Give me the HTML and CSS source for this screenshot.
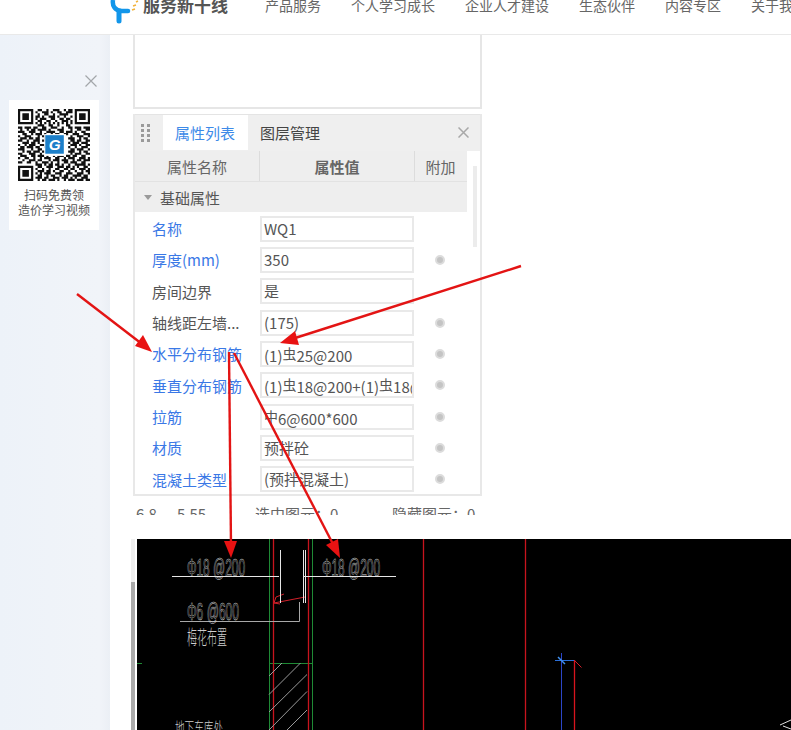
FILE: index.html
```html
<!DOCTYPE html>
<html lang="zh">
<head>
<meta charset="utf-8">
<title>服务新干线</title>
<link rel="stylesheet" href="styles.css">
</head>
<body>
<div class="app">
  <header class="topbar">
    <div class="logo">
      <svg class="logo-mark" width="29" height="24" viewBox="0 0 29 24">
        <path d="M3 0C2 6 5 10 11 11" fill="none" stroke="#1296ea" stroke-width="4.5"/>
        <path d="M9 11H18" fill="none" stroke="#1296ea" stroke-width="4.5" stroke-linecap="round"/>
        <path d="M9 12V21" fill="none" stroke="#1296ea" stroke-width="5" stroke-linecap="round"/>
        <path d="M22 10l3-1M23 6l3-1M26 2l2-1" fill="none" stroke="#f2b23a" stroke-width="1.6"/>
      </svg>
      <span class="logo-text">服务新干线</span>
    </div>
    <nav class="nav">
      <a>产品服务</a><a>个人学习成长</a><a>企业人才建设</a><a>生态伙伴</a><a>内容专区</a><a>关于我们</a>
    </nav>
  </header>
  <div class="content">
    <aside class="side">
      <svg class="side-close" width="12" height="12" viewBox="0 0 12 12"><path d="M.5.5l11 11M11.5.5l-11 11" stroke="#a3a6aa" stroke-width="1.2" fill="none"/></svg>
      <div class="qr-card">
        <svg class="qr" width="72" height="72" viewBox="0 0 33 33">
          <path fill="none" stroke="#111" stroke-width="1" d="M.5.5h6v6h-6zM26.5.5h6v6h-6zM.5 26.5h6v6h-6z"/>
          <path fill="#111" d="M2 2h3v3H2zM28 2h3v3h-3zM2 28h3v3H2z"/>
          <path fill="none" stroke="#111" stroke-width="1" d="M9 .5h2M13 .5h1M16 .5h3M21 .5h1M23 .5h2M8 1.5h1M11 1.5h3M15 1.5h1M18 1.5h2M22 1.5h3M9 2.5h1M12 2.5h2M16 2.5h1M19 2.5h4M8 3.5h2M11 3.5h1M14 3.5h3M18 3.5h1M21 3.5h1M24 3.5h1M8 4.5h1M10 4.5h3M15 4.5h2M19 4.5h2M22 4.5h2M9 5.5h2M13 5.5h2M17 5.5h1M20 5.5h3M24 5.5h1M8 6.5h1M10 6.5h1M12 6.5h1M14 6.5h1M16 6.5h1M18 6.5h1M20 6.5h1M22 6.5h1M24 6.5h1M9 7.5h3M14 7.5h2M18 7.5h1M22 7.5h2M0 8.5h2M3 8.5h3M7 8.5h2M11 8.5h2M15 8.5h3M20 8.5h1M23 8.5h2M26 8.5h3M30 8.5h3M1 9.5h1M4 9.5h1M6 9.5h2M9 9.5h4M14 9.5h1M18 9.5h3M24 9.5h1M27 9.5h2M31 9.5h2M0 10.5h3M5 10.5h3M10 10.5h1M13 10.5h4M19 10.5h2M22 10.5h3M26 10.5h1M29 10.5h2M2 11.5h2M6 11.5h1M8 11.5h3M12 11.5h1M15 11.5h1M17 11.5h2M21 11.5h2M25 11.5h3M30 11.5h3M0 12.5h1M3 12.5h3M9 12.5h1M11 12.5h2M14 12.5h2M24 12.5h1M27 12.5h3M32 12.5h1M1 13.5h3M5 13.5h2M8 13.5h2M12 13.5h1M23 13.5h3M28 13.5h1M30 13.5h2M0 14.5h2M4 14.5h1M7 14.5h3M11 14.5h2M24 14.5h2M27 14.5h2M31 14.5h2M2 15.5h3M6 15.5h2M9 15.5h1M13 15.5h1M23 15.5h1M25 15.5h3M29 15.5h3M0 16.5h1M3 16.5h1M5 16.5h3M10 16.5h3M24 16.5h3M28 16.5h1M31 16.5h2M1 17.5h2M4 17.5h3M8 17.5h2M12 17.5h1M23 17.5h1M26 17.5h1M29 17.5h3M0 18.5h3M6 18.5h1M9 18.5h2M13 18.5h1M24 18.5h2M27 18.5h3M32 18.5h1M2 19.5h1M4 19.5h2M7 19.5h3M11 19.5h2M23 19.5h3M28 19.5h1M30 19.5h2M0 20.5h2M5 20.5h3M10 20.5h1M14 20.5h3M19 20.5h2M24 20.5h1M26 20.5h3M31 20.5h2M1 21.5h3M6 21.5h2M9 21.5h3M13 21.5h1M16 21.5h1M18 21.5h3M22 21.5h2M25 21.5h2M29 21.5h2M0 22.5h1M3 22.5h2M7 22.5h1M10 22.5h1M12 22.5h3M17 22.5h2M21 22.5h1M23 22.5h3M28 22.5h3M32 22.5h1M2 23.5h1M5 23.5h3M9 23.5h2M14 23.5h1M16 23.5h3M20 23.5h3M25 23.5h1M27 23.5h2M30 23.5h3M0 24.5h2M4 24.5h2M8 24.5h1M11 24.5h3M15 24.5h1M18 24.5h1M21 24.5h2M24 24.5h3M29 24.5h2M8 25.5h3M12 25.5h1M14 25.5h2M17 25.5h2M20 25.5h1M23 25.5h1M26 25.5h5M32 25.5h1M9 26.5h2M13 26.5h3M18 26.5h3M22 26.5h2M25 26.5h1M27 26.5h1M30 26.5h2M8 27.5h1M11 27.5h1M14 27.5h1M17 27.5h2M21 27.5h2M24 27.5h2M28 27.5h3M32 27.5h1M9 28.5h3M13 28.5h2M16 28.5h1M19 28.5h2M23 28.5h1M26 28.5h1M29 28.5h1M31 28.5h2M8 29.5h1M10 29.5h1M12 29.5h3M17 29.5h3M22 29.5h3M27 29.5h3M32 29.5h1M9 30.5h2M13 30.5h1M15 30.5h2M19 30.5h1M21 30.5h2M25 30.5h4M30 30.5h2M8 31.5h3M12 31.5h2M16 31.5h3M20 31.5h3M24 31.5h1M26 31.5h1M29 31.5h3M9 32.5h1M11 32.5h2M14 32.5h3M18 32.5h1M21 32.5h1M23 32.5h3M27 32.5h3M31 32.5h2"/>
          <rect x="12" y="11.5" width="10" height="10" fill="#fff"/>
          <rect x="12.500" y="12" width="8.500" height="8.500" fill="#1c7fc9"/>
          <text x="16.800" y="19" class="qr-g" text-anchor="middle">G</text>
        </svg>
        <p class="qr-text">扫码免费领<br>造价学习视频</p>
      </div>
    </aside>
    <main class="main">
      <div class="blank-box"></div>
      <section class="panel">
        <div class="panel-bar">
          <svg class="drag" width="9" height="18" viewBox="0 0 9 18"><path fill="#9a9a9a" d="M0 0h3v3H0zM6 0h3v3H6zM0 5h3v3H0zM6 5h3v3H6zM0 10h3v3H0zM6 10h3v3H6zM0 15h3v3H0zM6 15h3v3H6z"/></svg>
          <span class="tab tab-on">属性列表</span>
          <span class="tab">图层管理</span>
          <svg class="panel-close" width="11" height="11" viewBox="0 0 11 11"><path d="M.5.5l10 10M10.5.5l-10 10" stroke="#a8a8a8" stroke-width="1.5" fill="none"/></svg>
        </div>
        <div class="panel-body">
          <div class="prop-wrap">
            <div class="thead">
              <span class="th">属性名称</span>
              <span class="th th-val">属性值</span>
              <span class="th th-add">附加</span>
            </div>
            <div class="group"><i class="caret"></i>基础属性</div>
            <div class="rows">
              <div class="row"><span class="key link">名称</span><span class="val">WQ1</span></div>
              <div class="row"><span class="key link">厚度(mm)</span><span class="val">350</span><i class="dot"></i></div>
              <div class="row"><span class="key">房间边界</span><span class="val">是</span></div>
              <div class="row"><span class="key">轴线距左墙...</span><span class="val">(175)</span><i class="dot"></i></div>
              <div class="row"><span class="key link">水平分布钢筋</span><span class="val">(1)<b class="bar">虫</b>25@200</span><i class="dot"></i></div>
              <div class="row"><span class="key link">垂直分布钢筋</span><span class="val">(1)<b class="bar">虫</b>18@200+(1)<b class="bar">虫</b>18@200</span><i class="dot"></i></div>
              <div class="row"><span class="key link">拉筋</span><span class="val"><b class="bar">中</b>6@600*600</span><i class="dot"></i></div>
              <div class="row"><span class="key link">材质</span><span class="val">预拌砼</span><i class="dot"></i></div>
              <div class="row"><span class="key link">混凝土类型</span><span class="val">(预拌混凝土)</span><i class="dot"></i></div>
            </div>
          </div>
          <div class="vscroll"></div>
        </div>
      </section>
      <div class="status"><span class="st-a">6.8，-5.55</span><span class="st-b">选中图元：0</span><span>隐藏图元：0</span></div>
      <div class="cad-row">
        <div class="cad-scroll"><div class="cad-thumb"></div></div>
        <svg class="cad" width="654" height="191" viewBox="137 539 654 191">
          <rect x="137" y="539" width="654" height="191" fill="#000"/>
          <g fill="none" stroke-width="1">
            <path stroke="#1f8a35" d="M269.500 539V730M312.500 539V730M269 663.500H312M137 663.500H142"/>
            <path stroke="#c8141e" stroke-width="1.3" d="M273.500 539V730M308.500 539V730M423.500 539V730M525.500 539V730"/>
            <path stroke="#d8141e" stroke-width="1.3" d="M574.500 660V730"/>
            <path stroke="#2b45c8" d="M561.500 653V730"/>
            <path stroke="#2b6fd8" d="M555 660.500H574"/>
            <path stroke="#3f8ff0" stroke-width="1.5" d="M558 657l7 7"/>
            <path stroke="#d0202a" d="M574.500 660.500l7 7M274 603l31-6M274 603l2-6 8-3M274 603l6 1"/>
            <path stroke="#e6e6e6" d="M172 576.500H279M303 576.500H396M280.500 550V603M303.500 550V603M305.500 550V603"/>
            <path stroke="#a8a8a8" d="M180 621.500H299.500M299.500 602V621.500"/>
            <path stroke="#9a9a9a" d="M269 676l13-13M269 694.500l31.500-31.500M269 712l38-37.500M269 730l38-38.500M287 730l20-20"/>
            <path stroke="#e0e0e0" d="M780 725l11-5M783 726l8 3"/>
          </g>
          <text class="cad-t" x="187" y="576" textLength="58" lengthAdjust="spacingAndGlyphs">Φ18 @200</text>
          <text class="cad-t" x="322" y="576" textLength="58" lengthAdjust="spacingAndGlyphs">Φ18 @200</text>
          <text class="cad-t" x="187" y="620" textLength="52" lengthAdjust="spacingAndGlyphs">Φ6 @600</text>
          <text class="cad-c" x="187" y="645" textLength="40" lengthAdjust="spacingAndGlyphs">梅花布置</text>
          <text class="cad-c cad-c2" x="175" y="733" textLength="48" lengthAdjust="spacingAndGlyphs">地下车库处</text>
        </svg>
      </div>
    </main>
  </div>
  <svg class="arrows" width="791" height="730" viewBox="0 0 791 730">
    <g fill="none" stroke="#e31414" stroke-width="2.4">
      <path d="M77 294L142 344"/>
      <path d="M521 266L292 339"/>
      <path d="M229 352L231 545"/>
      <path d="M234 353L334 546"/>
    </g>
    <g fill="#e81212">
      <path d="M152 352L135 346L143 335Z"/>
      <path d="M280 343L295 331L299 345Z"/>
      <path d="M231 558L224 541L237 541Z"/>
      <path d="M340 558L326 545L338 539Z"/>
    </g>
  </svg>
</div>
</body>
</html>
```

FILE: styles.css
```css
* { box-sizing: border-box; }
html, body { margin: 0; padding: 0; background: #fff; }
body { font-family: "Noto Sans CJK SC", "Liberation Sans", sans-serif; color: #555; }
.app { position: relative; width: 791px; height: 730px; overflow: hidden; }

.topbar { display: flex; height: 35px; padding-left: 110px; border-bottom: 1px solid #e9e9e9; overflow: hidden; }
.logo { display: flex; align-items: flex-start; width: 155px; flex: none; }
.logo-mark { flex: none; }
.logo-text { margin: -7px 0 0 4px; font-size: 17px; line-height: 24px; font-weight: 700; color: #555; white-space: nowrap; }
.nav { display: flex; gap: 30px; margin-top: -5px; font-size: 14px; line-height: 20px; color: #666; white-space: nowrap; }

.content { display: flex; height: 695px; }
.side { flex: none; width: 110px; background: linear-gradient(90deg, #edf2f9 0, #f1f4f9 90%, #ebeff5 100%); padding: 40px 0 0 9px; }
.side-close { display: block; margin: 0 0 13px 76px; }
.qr-card { width: 90px; height: 130px; background: #fff; padding-top: 9px; }
.qr { display: block; margin-left: 9px; }
.qr-g { font: italic 700 7px "Liberation Sans", sans-serif; fill: #fff; }
.qr-text { margin: 6px 0 0; font-size: 12px; line-height: 15px; text-align: center; color: #555; white-space: nowrap; }

.main { flex: 1; min-width: 0; padding-left: 23px; }
.blank-box { width: 349px; height: 74px; border: 2px solid #e6e6e6; border-top: 0; }
.panel { width: 349px; height: 382px; margin-top: 5px; border: 2px solid #e8e8e8; border-top: 0; }
.panel-bar { display: flex; align-items: center; height: 37px; padding-bottom: 1px; background: #efefef; border-top: 1px solid #e4e4e4; }
.drag { margin-left: 6px; }
.tab { display: flex; align-items: center; height: 35px; font-size: 15px; color: #444; }
.tab-on { width: 85px; margin: 0 12px 0 13px; padding-left: 12px; background: #fff; color: #3d8ae8; }
.panel-close { margin-left: auto; margin-right: 11px; }

.panel-body { display: flex; }
.prop-wrap { width: 332px; }
.thead { display: flex; height: 31px; background: #eee; border-bottom: 1px solid #e2e2e2; font-size: 15px; color: #666; }
.th { display: flex; align-items: center; justify-content: center; width: 125px; border-right: 1px solid #dcdcdc; }
.th-val { width: 155px; font-weight: 700; }
.th-add { width: 51px; border-right: 0; }
.group { display: flex; align-items: center; height: 30px; background: #eee; font-size: 15px; color: #555; }
.caret { width: 0; height: 0; margin: 0 8px 0 9px; border: 4px solid transparent; border-top: 5px solid #9a9a9a; border-bottom: 0; }
.rows { padding-top: 1px; }
.row { display: flex; align-items: center; height: 31.33px; font-size: 15px; }
.key { width: 108px; margin-left: 17px; flex: none; white-space: nowrap; color: #555; }
.link { color: #3a78e6; }
.val { flex: none; width: 154px; height: 26px; padding: 0 2px; line-height: 21px; border: 2px solid #e9e9e9; overflow: hidden; white-space: nowrap; color: #555; background: #fff; }
.bar { font-weight: 400; font-size: 14px; vertical-align: 3px; }
.dot { width: 10px; height: 10px; margin-left: 21px; border-radius: 50%; background: #c4c4c4; border: 2px solid #dcdcdc; }
.vscroll { width: 4px; height: 81px; margin: 15px 0 0 6px; background: #ececec; }

.status { display: flex; width: 345px; height: 10px; margin: 9px 0 0 3px; font-size: 15px; line-height: 18px; color: #666; overflow: hidden; white-space: nowrap; }
.status span { display: block; flex: none; }
.status .st-a { width: 119px; }
.status .st-b { width: 137px; }

.cad-row { display: flex; margin: 24px 0 0 -2px; height: 191px; }
.cad-scroll { flex: none; width: 4px; margin-right: 2px; padding-top: 43px; background: #efefef; }
.cad-thumb { height: 148px; background: #a9a9a9; }
.cad { flex: none; display: block; }
.cad-t { font: 300 23px "Liberation Sans", sans-serif; fill: none; stroke: #ddd; stroke-width: .5; }
.cad-c { font: 300 20px "Noto Sans CJK SC", sans-serif; fill: #cfcfcf; }
.cad-c2 { font-size: 15px; }

.arrows { position: absolute; top: 0; left: 0; pointer-events: none; }
```
